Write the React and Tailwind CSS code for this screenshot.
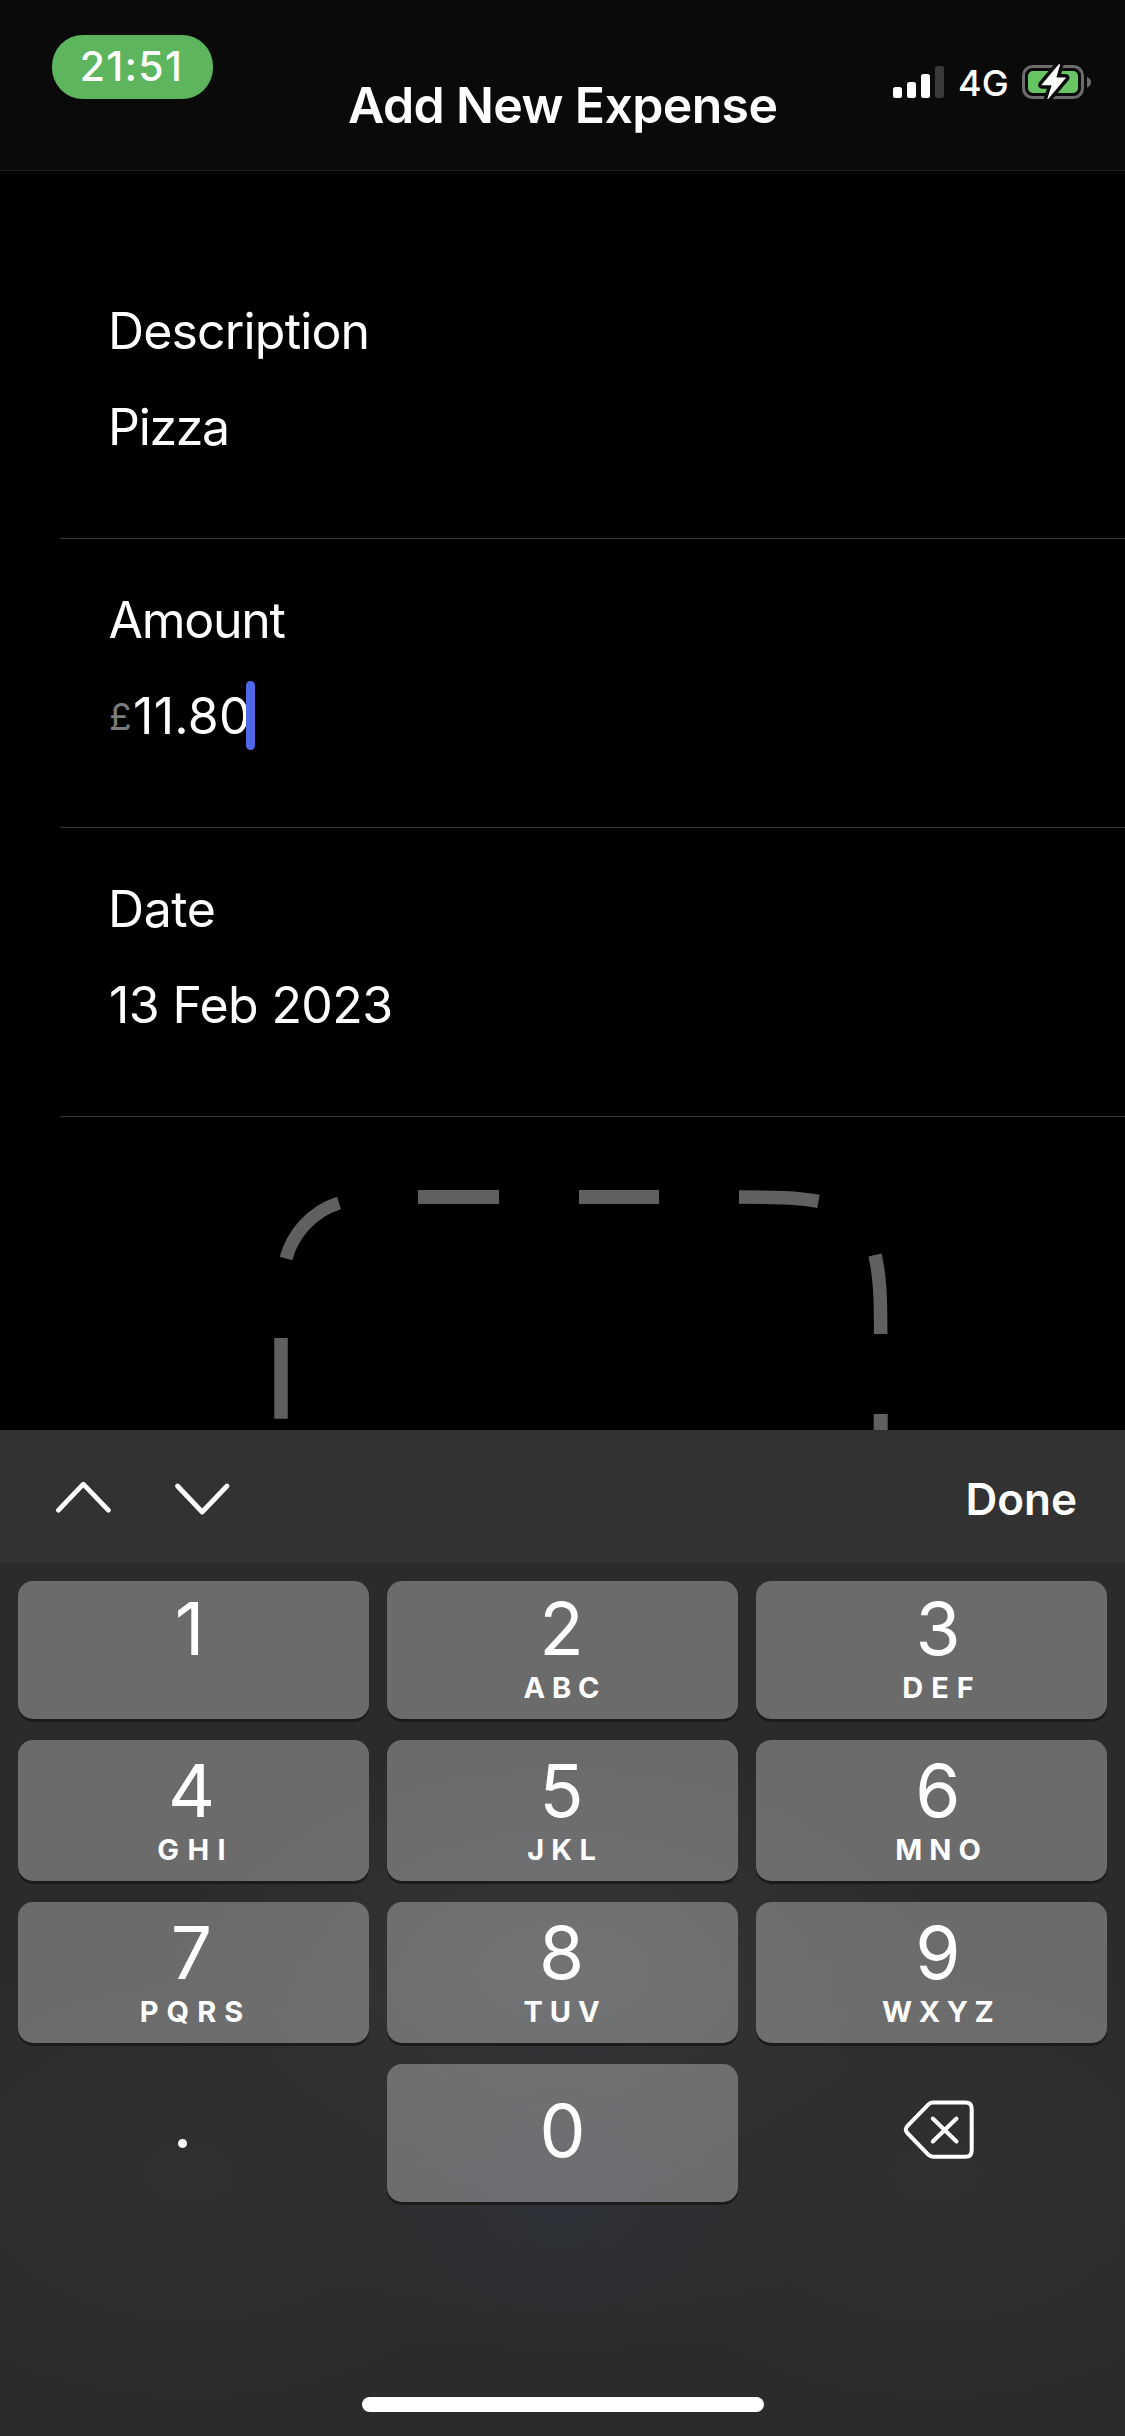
const FIELDS = [
  { label: "Description", labelClass: "ml-[-2px] tracking-[-0.84px]", value: "Pizza", valueClass: "ml-[-2px] tracking-[-1.3px]" },
  { label: "Amount", labelClass: "ml-[-1.5px] tracking-[-1.3px]", value: "11.80", valueClass: "tracking-[0.3px]", prefix: "£", focused: true },
  { label: "Date", labelClass: "ml-[-2px] tracking-[-0.4px]", value: "13 Feb 2023", valueClass: "ml-[-1px] tracking-[-0.6px]" },
];

const ROWS = [
  {
    className: "h-[138px]",
    digitClass: "mt-[8px]",
    keys: [
      { digit: "1", letters: "", shift: "pr-2" },
      { digit: "2", letters: "ABC", tracking: "tracking-[6.8px] mr-[-6.8px]", shift: "pr-0.5" },
      { digit: "3", letters: "DEF", tracking: "tracking-[7.9px] mr-[-7.9px]", shift: "pl-[13px]" },
    ],
  },
  {
    className: "h-[141px]",
    digitClass: "mt-[11px]",
    keys: [
      { digit: "4", letters: "GHI", tracking: "tracking-[8.4px] mr-[-8.4px]", shift: "pr-1" },
      { digit: "5", letters: "JKL", tracking: "tracking-[7.2px] mr-[-7.2px]", shift: "pr-0.5" },
      { digit: "6", letters: "MNO", tracking: "tracking-[7.1px] mr-[-7.1px]", shift: "pl-[13px]" },
    ],
  },
  {
    className: "h-[141px]",
    digitClass: "mt-[11px]",
    keys: [
      { digit: "7", letters: "PQRS", tracking: "tracking-[8.1px] mr-[-8.1px]", shift: "pr-1" },
      { digit: "8", letters: "TUV", tracking: "tracking-[7px] mr-[-7px]", shift: "pr-0.5" },
      { digit: "9", letters: "WXYZ", tracking: "tracking-[6.6px] mr-[-6.6px]", shift: "pl-[13px]" },
    ],
  },
];

function SignalIcon() {
  return (
    <svg className="mt-[66px] h-8 w-[51px]" viewBox="0 0 51 32" fill="#fff">
      <rect x="0" y="21" width="9" height="11" rx="2.5" />
      <rect x="14" y="16" width="9" height="16" rx="2.5" />
      <rect x="28" y="8" width="9" height="24" rx="2.5" />
      <rect x="42" y="0" width="9" height="32" rx="2.5" fill="#3a3a3a" />
    </svg>
  );
}

function BatteryIcon() {
  const bolt = "M36.8 0.3 L19.8 20.6 Q19.4 21.2 20.2 21.2 H29.6 L25.4 34.4 Q25.6 35.4 26.6 34.5 L43.8 14 Q44.2 13.4 43.4 13.4 H34.4 L38 1 Q37.8 -0.4 36.8 0.3 Z";
  return (
    <svg className="mt-16 h-9 w-[70px]" viewBox="0 0 70 36">
      <rect x="1.5" y="2.5" width="59" height="31" rx="9" fill="none" stroke="#6c6c6c" strokeWidth="3" />
      <rect x="6" y="7" width="50" height="22" rx="5" fill="#68c564" />
      <path d="M65 13 Q69 14.6 69 18.3 Q69 22 65 23.6 Z" fill="#6c6c6c" />
      <path d={bolt} fill="#0a0a0a" stroke="#0a0a0a" strokeWidth="7" strokeLinejoin="round" />
      <path d={bolt} fill="#fff" />
    </svg>
  );
}

function Header() {
  return (
    <header className="flex h-[171px] items-start border-b border-[#1e1e1e] bg-[#0a0a0a]">
      <div className="ml-[52px] mt-[35px] flex h-16 w-[161px] items-center justify-center rounded-[31px] bg-[#5db55e] pr-0.5 text-[41px] leading-[62px] font-medium tracking-[1.25px]">
        <span className="mt-[-2px]">21:51</span>
      </div>
      <h1 className="ml-[135px] mt-[75px] w-[545px] text-[50px] leading-[60px] font-semibold tracking-[-0.65px] whitespace-nowrap">
        Add New Expense
      </h1>
      <SignalIcon />
      <span className="ml-[14px] mt-[63px] w-16 text-[36px] leading-10 font-medium">4G</span>
      <BatteryIcon />
    </header>
  );
}

function Field({ field }) {
  return (
    <div className="ml-[60px] h-[289px] border-b border-[#3a3a3a] pt-[51px] pl-[50px] text-[50px] leading-[60px]">
      <div className={field.labelClass}>{field.label}</div>
      <div className="mt-9 flex items-start">
        {field.prefix && (
          <span className="ml-[-1px] w-6 text-[37px] leading-[62px] text-[#7c7c7c]">{field.prefix}</span>
        )}
        <span className={`relative ${field.valueClass}`}>
          {field.value}
          {field.focused && (
            <span className="absolute top-[-5px] right-[-4px] h-[69px] w-[9px] rounded-full bg-[#4d69ea]" />
          )}
        </span>
      </div>
    </div>
  );
}

function ImagePlaceholder() {
  return (
    <svg className="ml-[270px] block h-[313px] w-[622px]" viewBox="270 1117 622 313" fill="none" stroke="#606060">
      <path d="M281 1338 V1418.7" strokeWidth="13.5" />
      <path d="M286 1258.5 C292 1236 310 1212 339 1203" strokeWidth="13" />
      <path d="M418 1197 H499 M579 1197 H659" strokeWidth="14" />
      <path d="M739 1197 C776 1197 797 1197.5 818.5 1201.3" strokeWidth="13.5" />
      <path d="M875 1255 C880 1277 880.7 1298 880.7 1334" strokeWidth="13.5" />
      <path d="M880.7 1414 V1431" strokeWidth="14" />
    </svg>
  );
}

function Key({ item, digitClass }) {
  return (
    <button className={`flex w-[351px] flex-none flex-col items-center rounded-[15px] bg-white/30 shadow-[0_3px_0_#1b1b1c] ${item.shift}`}>
      <span className={`text-[73px] leading-[80px] ${digitClass}`}>{item.digit}</span>
      {item.letters && (
        <span className={`mt-px text-[29px] leading-9 font-bold ${item.tracking}`}>{item.letters}</span>
      )}
    </button>
  );
}

function DeleteIcon() {
  return (
    <svg className="h-[60px] w-[72px]" viewBox="903 2099 72 60" fill="none" stroke="#fff" strokeWidth="4" strokeLinecap="round" strokeLinejoin="round">
      <path d="M933 2102.5 H965.5 Q971.7 2102.5 971.7 2108.7 V2150.5 Q971.7 2156.7 965.5 2156.7 H933 Q930.5 2156.7 928.5 2154.8 L907.3 2133 Q904.3 2129.6 907.3 2126.2 L928.5 2104.4 Q930.5 2102.5 933 2102.5 Z" />
      <path d="M932.8 2118.5 L956.5 2141.5 M956.5 2118.5 L932.8 2141.5" />
    </svg>
  );
}

function Toolbar() {
  return (
    <div className="flex h-[133px] items-center justify-between bg-[#323232] pr-12 pl-14">
      <svg className="mt-0.5 h-10 w-[176px]" viewBox="56 1477.5 176 40" fill="none" stroke="#fff" strokeWidth="4.8" strokeLinecap="round" strokeLinejoin="round">
        <path d="M58.5 1509.7 L83.3 1483.7 L108.3 1509.7" />
        <path d="M177.5 1485.5 L202.2 1511.5 L227 1485.5" />
      </svg>
      <span className="mt-1 text-[44px] leading-[52px] font-semibold">Done</span>
    </div>
  );
}

function Keyboard() {
  return (
    <section className="flex h-[1006px] flex-col">
      <Toolbar />
      <div className="flex h-[873px] flex-col bg-[#2b2b2b] bg-[radial-gradient(400px_230px_at_562px_410px,#35373a_0%,#35373a00_100%),radial-gradient(260px_170px_at_562px_640px,#2e3137_0%,#2e313700_100%),radial-gradient(380px_260px_at_190px_610px,#303030_0%,#30303000_100%),radial-gradient(380px_260px_at_935px_610px,#303030_0%,#30303000_100%)]">
        <div className="flex flex-col gap-[21px] px-[18px] pt-[18px]">
          {ROWS.map((row) => (
            <div key={row.keys[0].digit} className={`flex gap-[18px] ${row.className}`}>
              {row.keys.map((item) => (
                <Key key={item.digit} item={item} digitClass={row.digitClass} />
              ))}
            </div>
          ))}
          <div className="flex h-[138px] gap-[18px]">
            <button className="flex w-[351px] flex-none justify-center pr-[22px] pt-[17px] text-[68px] leading-[84px]">.</button>
            <button className="flex w-[351px] flex-none justify-center rounded-[15px] bg-white/30 pt-[27px] text-[73px] leading-[80px] shadow-[0_3px_0_#1b1b1c]">0</button>
            <button className="flex w-[351px] flex-none justify-center pt-[35px] pl-[15px]">
              <DeleteIcon />
            </button>
          </div>
        </div>
        <div className="mx-auto mt-auto mb-6 h-[15px] w-[402px] rounded-full bg-white" />
      </div>
    </section>
  );
}

export default function App() {
  return (
    <div className="h-[2436px] w-[1125px] overflow-hidden bg-black font-[Inter,sans-serif] text-white">
      <Header />
      <main className="pt-[79px]">
        {FIELDS.map((field) => (
          <Field key={field.label} field={field} />
        ))}
        <ImagePlaceholder />
      </main>
      <Keyboard />
    </div>
  );
}
